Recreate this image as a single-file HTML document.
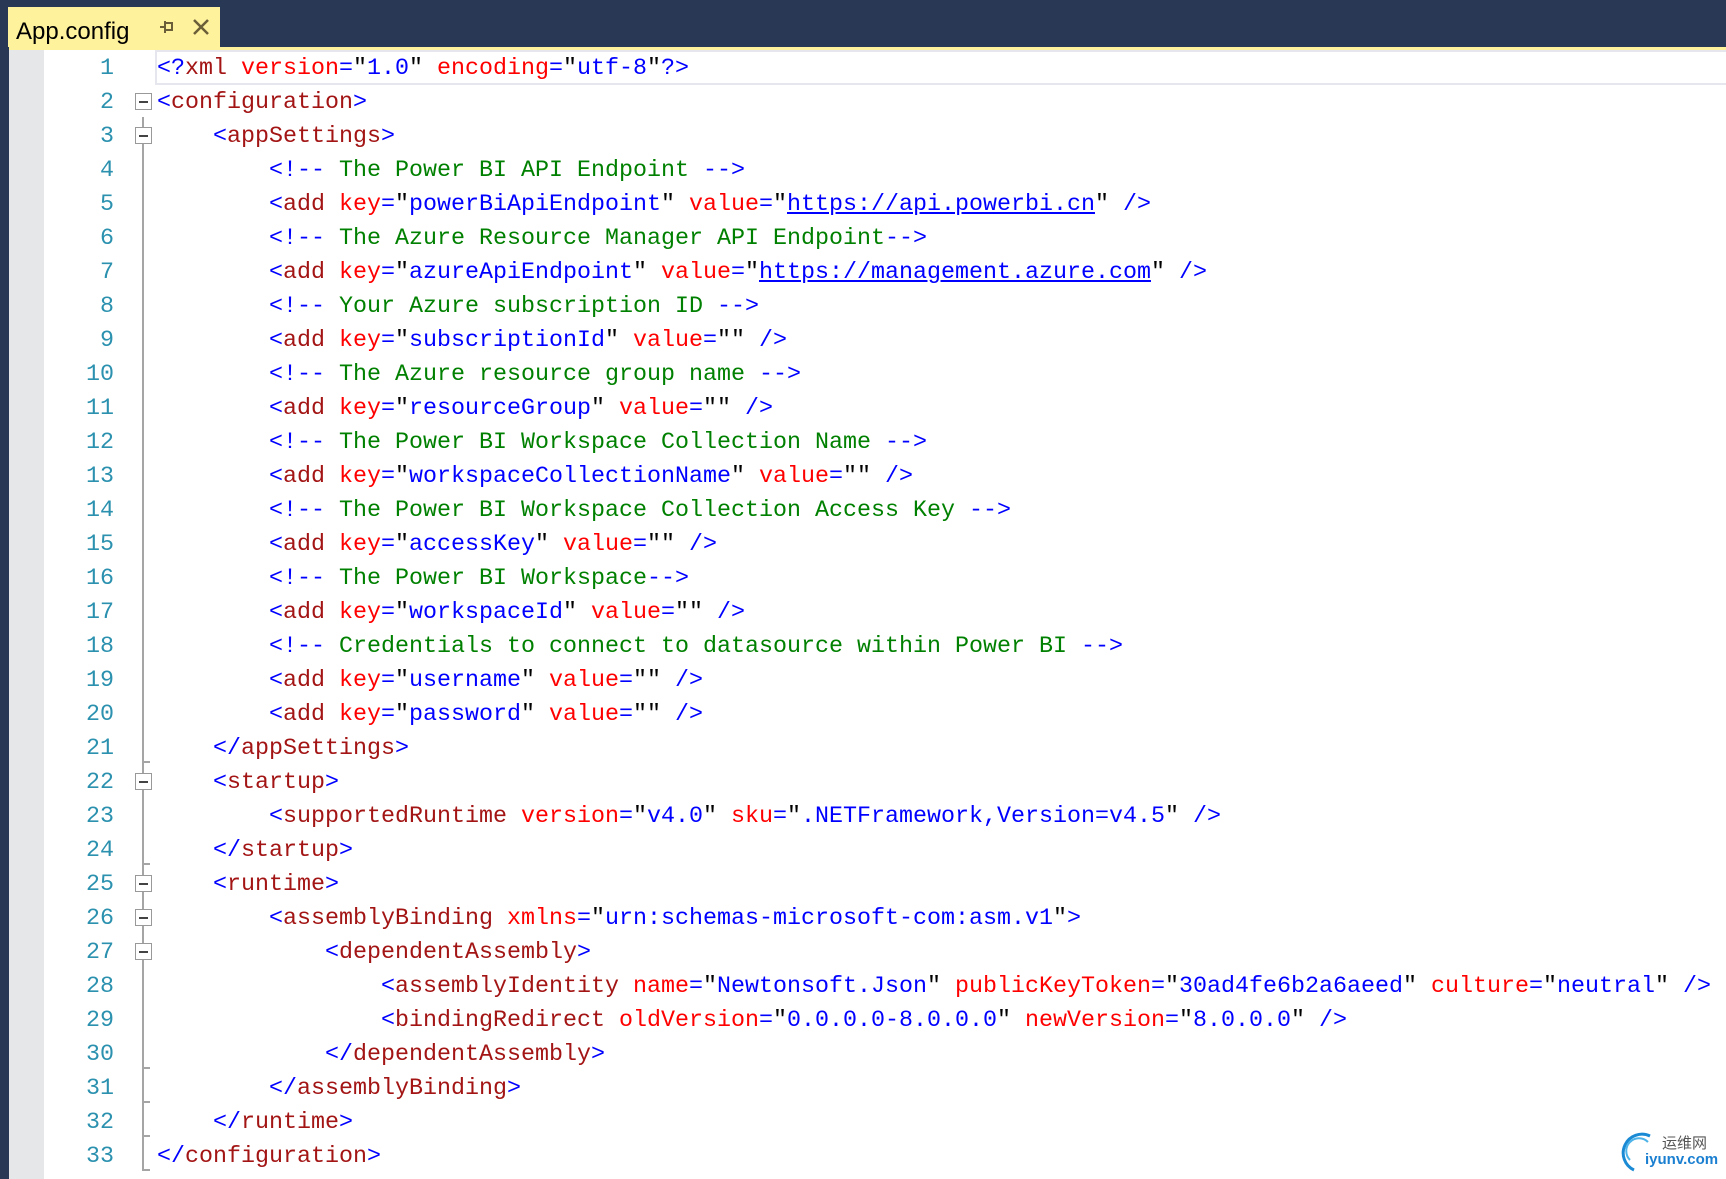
<!DOCTYPE html>
<html><head><meta charset="utf-8"><style>
body{margin:0;width:1726px;height:1179px;background:#fff;overflow:hidden;position:relative;font-family:"Liberation Mono",monospace}
.top{position:absolute;left:0;top:0;width:1726px;height:47px;background:#293955}
.tab{position:absolute;left:8px;top:7px;width:212px;height:40px;background:#fff29d;font-family:"Liberation Sans",sans-serif;font-size:24px;color:#000}
.tab span{position:absolute;left:8px;top:11px}
.ygap{position:absolute;left:0;top:47px;width:1726px;height:3px;background:#fff29d}
.leftd{position:absolute;left:0;top:47px;width:9px;height:1132px;background:#293955}
.mg{position:absolute;left:9px;top:50px;width:35px;height:1129px;background:#e6e7e8}
.cur{position:absolute;left:155px;top:50px;width:1580px;height:31px;border:2px solid #e6e7ee;border-right:none}
.ln{position:absolute;left:44px;width:70px;text-align:right;color:#2b91af;font-size:23.33px;line-height:34px}
.code{position:absolute;left:157px;top:52px;font-size:23.33px;line-height:34px;white-space:pre;color:#000}
.b{color:#0000ff}.t{color:#a31515}.a{color:#ff0000}.c{color:#008000}.u{color:#0000ff;text-decoration:underline}
.fb{position:absolute;left:135px;width:15px;height:15px;border:1px solid #999;background:#fff}
.fb:after{content:"";position:absolute;left:3px;top:7px;width:9px;height:2px;background:#444}
.vl{position:absolute;left:142px;width:2px;background:#a5a5a5}
.tk{position:absolute;left:142px;width:8px;height:2px;background:#a5a5a5}
</style></head><body>
<div class="top"></div>
<div class="tab"><span>App.config</span>
<svg style="position:absolute;left:150px;top:11px" width="18" height="18" viewBox="0 0 18 18"><path d="M2 9h5M7 3v12M7 5h7v7H7" fill="none" stroke="#6b5f3a" stroke-width="2"/></svg>
<svg style="position:absolute;left:183px;top:10px" width="20" height="20" viewBox="0 0 20 20"><path d="M3 3L17 17M17 3L3 17" stroke="#6b5f3a" stroke-width="2.5"/></svg>
</div>
<div class="ygap"></div>
<div class="leftd"></div>
<div class="mg"></div>
<div class="cur"></div>
<div class="vl" style="top:117px;height:1054px"></div>
<div class="tk" style="top:761px"></div><div class="tk" style="top:863px"></div><div class="tk" style="top:1067px"></div><div class="tk" style="top:1101px"></div><div class="tk" style="top:1135px"></div><div class="tk" style="top:1169px"></div>
<div class="fb" style="top:93px"></div><div class="fb" style="top:127px"></div><div class="fb" style="top:773px"></div><div class="fb" style="top:875px"></div><div class="fb" style="top:909px"></div><div class="fb" style="top:943px"></div>
<div class="ln" style="top:52px">1<br>2<br>3<br>4<br>5<br>6<br>7<br>8<br>9<br>10<br>11<br>12<br>13<br>14<br>15<br>16<br>17<br>18<br>19<br>20<br>21<br>22<br>23<br>24<br>25<br>26<br>27<br>28<br>29<br>30<br>31<br>32<br>33</div>
<div class="code"><span class="b">&lt;?</span><span class="t">xml</span> <span class="a">version</span><span class="b">=</span>"<span class="b">1.0</span>" <span class="a">encoding</span><span class="b">=</span>"<span class="b">utf-8</span>"<span class="b">?&gt;</span>
<span class="b">&lt;</span><span class="t">configuration</span><span class="b">&gt;</span>
    <span class="b">&lt;</span><span class="t">appSettings</span><span class="b">&gt;</span>
        <span class="b">&lt;!--</span><span class="c"> The Power BI API Endpoint </span><span class="b">--&gt;</span>
        <span class="b">&lt;</span><span class="t">add</span> <span class="a">key</span><span class="b">=</span>"<span class="b">powerBiApiEndpoint</span>" <span class="a">value</span><span class="b">=</span>"<span class="u">https://api.powerbi.cn</span>" <span class="b">/&gt;</span>
        <span class="b">&lt;!--</span><span class="c"> The Azure Resource Manager API Endpoint</span><span class="b">--&gt;</span>
        <span class="b">&lt;</span><span class="t">add</span> <span class="a">key</span><span class="b">=</span>"<span class="b">azureApiEndpoint</span>" <span class="a">value</span><span class="b">=</span>"<span class="u">https://management.azure.com</span>" <span class="b">/&gt;</span>
        <span class="b">&lt;!--</span><span class="c"> Your Azure subscription ID </span><span class="b">--&gt;</span>
        <span class="b">&lt;</span><span class="t">add</span> <span class="a">key</span><span class="b">=</span>"<span class="b">subscriptionId</span>" <span class="a">value</span><span class="b">=</span>"" <span class="b">/&gt;</span>
        <span class="b">&lt;!--</span><span class="c"> The Azure resource group name </span><span class="b">--&gt;</span>
        <span class="b">&lt;</span><span class="t">add</span> <span class="a">key</span><span class="b">=</span>"<span class="b">resourceGroup</span>" <span class="a">value</span><span class="b">=</span>"" <span class="b">/&gt;</span>
        <span class="b">&lt;!--</span><span class="c"> The Power BI Workspace Collection Name </span><span class="b">--&gt;</span>
        <span class="b">&lt;</span><span class="t">add</span> <span class="a">key</span><span class="b">=</span>"<span class="b">workspaceCollectionName</span>" <span class="a">value</span><span class="b">=</span>"" <span class="b">/&gt;</span>
        <span class="b">&lt;!--</span><span class="c"> The Power BI Workspace Collection Access Key </span><span class="b">--&gt;</span>
        <span class="b">&lt;</span><span class="t">add</span> <span class="a">key</span><span class="b">=</span>"<span class="b">accessKey</span>" <span class="a">value</span><span class="b">=</span>"" <span class="b">/&gt;</span>
        <span class="b">&lt;!--</span><span class="c"> The Power BI Workspace</span><span class="b">--&gt;</span>
        <span class="b">&lt;</span><span class="t">add</span> <span class="a">key</span><span class="b">=</span>"<span class="b">workspaceId</span>" <span class="a">value</span><span class="b">=</span>"" <span class="b">/&gt;</span>
        <span class="b">&lt;!--</span><span class="c"> Credentials to connect to datasource within Power BI </span><span class="b">--&gt;</span>
        <span class="b">&lt;</span><span class="t">add</span> <span class="a">key</span><span class="b">=</span>"<span class="b">username</span>" <span class="a">value</span><span class="b">=</span>"" <span class="b">/&gt;</span>
        <span class="b">&lt;</span><span class="t">add</span> <span class="a">key</span><span class="b">=</span>"<span class="b">password</span>" <span class="a">value</span><span class="b">=</span>"" <span class="b">/&gt;</span>
    <span class="b">&lt;/</span><span class="t">appSettings</span><span class="b">&gt;</span>
    <span class="b">&lt;</span><span class="t">startup</span><span class="b">&gt;</span>
        <span class="b">&lt;</span><span class="t">supportedRuntime</span> <span class="a">version</span><span class="b">=</span>"<span class="b">v4.0</span>" <span class="a">sku</span><span class="b">=</span>"<span class="b">.NETFramework,Version=v4.5</span>" <span class="b">/&gt;</span>
    <span class="b">&lt;/</span><span class="t">startup</span><span class="b">&gt;</span>
    <span class="b">&lt;</span><span class="t">runtime</span><span class="b">&gt;</span>
        <span class="b">&lt;</span><span class="t">assemblyBinding</span> <span class="a">xmlns</span><span class="b">=</span>"<span class="b">urn:schemas-microsoft-com:asm.v1</span>"<span class="b">&gt;</span>
            <span class="b">&lt;</span><span class="t">dependentAssembly</span><span class="b">&gt;</span>
                <span class="b">&lt;</span><span class="t">assemblyIdentity</span> <span class="a">name</span><span class="b">=</span>"<span class="b">Newtonsoft.Json</span>" <span class="a">publicKeyToken</span><span class="b">=</span>"<span class="b">30ad4fe6b2a6aeed</span>" <span class="a">culture</span><span class="b">=</span>"<span class="b">neutral</span>" <span class="b">/&gt;</span>
                <span class="b">&lt;</span><span class="t">bindingRedirect</span> <span class="a">oldVersion</span><span class="b">=</span>"<span class="b">0.0.0.0-8.0.0.0</span>" <span class="a">newVersion</span><span class="b">=</span>"<span class="b">8.0.0.0</span>" <span class="b">/&gt;</span>
            <span class="b">&lt;/</span><span class="t">dependentAssembly</span><span class="b">&gt;</span>
        <span class="b">&lt;/</span><span class="t">assemblyBinding</span><span class="b">&gt;</span>
    <span class="b">&lt;/</span><span class="t">runtime</span><span class="b">&gt;</span>
<span class="b">&lt;/</span><span class="t">configuration</span><span class="b">&gt;</span></div>
<svg style="position:absolute;left:1620px;top:1130px" width="40" height="44" viewBox="0 0 40 44"><path d="M30 6A18 18 0 1 0 14 40" fill="none" stroke="#1a8ad4" stroke-width="3"/><path d="M28 12A12 12 0 0 0 10 30" fill="none" stroke="#4db3e8" stroke-width="2"/></svg>
<div style="position:absolute;left:1662px;top:1132px;font-family:'Liberation Sans','Noto Sans CJK SC',sans-serif;font-size:15px;color:#555">运维网</div>
<div style="position:absolute;left:1645px;top:1151px;font-family:'Liberation Sans',sans-serif;font-size:15px;font-weight:bold;color:#1a7fd0">iyunv.com</div>
</body></html>
